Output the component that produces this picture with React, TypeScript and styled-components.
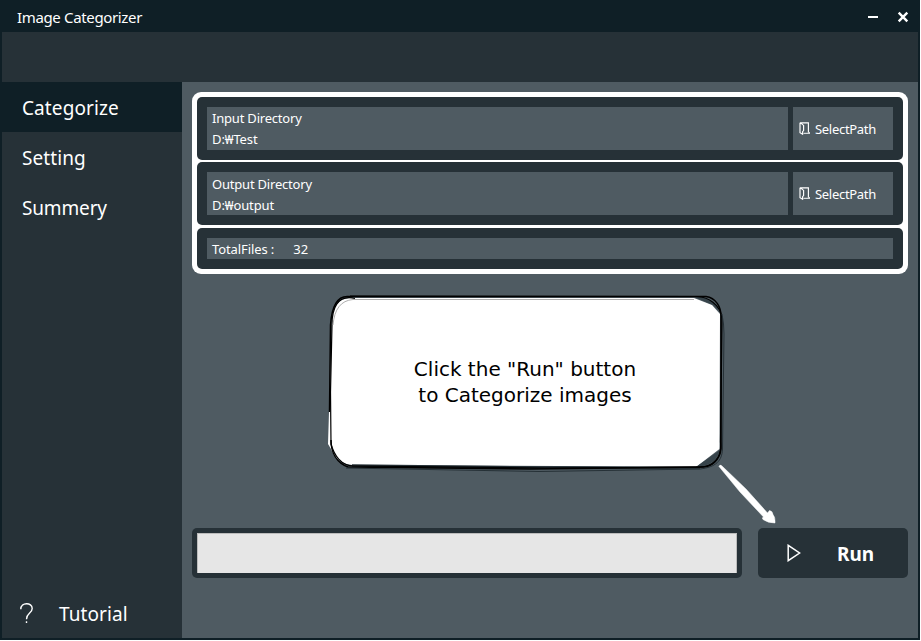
import React from 'react';
import styled, { createGlobalStyle } from 'styled-components';

const Global = createGlobalStyle`
  html, body { margin: 0; background: #fff; overflow: hidden; }
  * { box-sizing: border-box; }
`;

const Window = styled.div`
  width: 920px;
  height: 640px;
  display: grid;
  grid-template-rows: 32px 50px 1fr;
  padding: 0 2px 2px;
  background: #0f1f26;
  color: #fff;
  font-family: "Noto Sans", "Noto Sans CJK KR", sans-serif;
`;

const TitleBar = styled.header`
  display: flex;
  align-items: center;
  justify-content: space-between;
  padding: 3px 9px 0 15px;
`;

const Caption = styled.div<{ $size: number; $spacing?: number; $bold?: boolean }>`
  font-size: ${(p) => p.$size}px;
  letter-spacing: ${(p) => p.$spacing ?? 0}px;
  font-weight: ${(p) => (p.$bold ? 700 : 400)};
  line-height: 1.4;
  white-space: pre;
`;

const WindowButtons = styled.div`
  display: flex;
  align-items: center;
  gap: 18px;
  svg { display: block; margin-top: -2px; }
`;

const Ribbon = styled.div`
  background: #263137;
`;

const Body = styled.div`
  display: grid;
  grid-template-columns: 180px 1fr;
  min-height: 0;
`;

const Sidebar = styled.nav`
  display: flex;
  flex-direction: column;
  background: #263137;
`;

const NavItem = styled.div<{ $active?: boolean }>`
  height: 50px;
  padding: 2px 0 0 20px;
  display: flex;
  align-items: center;
  background: ${(p) => (p.$active ? '#0f1f26' : 'transparent')};
`;

const Tutorial = styled(NavItem)`
  margin-top: auto;
  padding-left: 18px;
  gap: 26px;
  svg { display: block; margin-top: -1px; }
`;

const Content = styled.main`
  display: flex;
  flex-direction: column;
  padding: 10px 10px 60px;
  background: #4f5b62;
`;

const Settings = styled.section`
  height: 182px;
  padding: 5px;
  display: grid;
  grid-template-rows: 62.6px 62.6px 41.3px;
  gap: 2.8px;
  border-radius: 9px;
  background: #fff;
`;

const Row = styled.div`
  display: flex;
  gap: 5px;
  padding: 10px;
  border-radius: 5px;
  background: #263137;
`;

const Field = styled.div`
  flex: 1;
  min-width: 0;
  padding: 1.3px 5px 0;
  background: #4f5b62;
  > div { line-height: 21px; }
`;

const TotalField = styled(Field)`
  display: flex;
  gap: 19px;
`;

const PathButton = styled.div`
  width: 100px;
  display: flex;
  align-items: center;
  gap: 5px;
  padding-left: 6px;
  background: #4f5b62;
  > div { padding-top: 1px; }
`;

const Canvas = styled.div`
  position: relative;
  flex: 1;
`;

const Sketch = styled.svg`
  position: absolute;
  left: 128px;
  top: 11px;
  overflow: visible;
`;

const Message = styled.div`
  position: absolute;
  left: 139px;
  top: 82px;
  width: 388px;
  text-align: center;
  color: #000;
  font: 20px/26px "DejaVu Sans", sans-serif;
`;

const Footer = styled.div`
  display: flex;
  justify-content: space-between;
  height: 50px;
`;

const ProgressFrame = styled.div`
  width: 550px;
  padding: 5px;
  border-radius: 5px;
  background: #263137;
`;

const Progress = styled.div`
  height: 40px;
  border: solid #bcbcbc;
  border-width: 1px 1px 0 1px;
  background: #e6e6e6;
`;

const RunButton = styled.div`
  width: 150px;
  display: flex;
  align-items: center;
  padding-left: 29px;
  gap: 36px;
  border-radius: 5px;
  background: #263137;
  > div { padding-top: 2px; }
`;

const FolderIcon = () => (
  <svg width="11" height="13" viewBox="0 0 11 13" fill="none" stroke="#fff">
    <path d="M.9 .8H9.4V10.8M1 .8V10.7L3.6 12.2V9.7L4.6 8.5V3.4L1.5.9" strokeWidth="1.15" />
    <path d="M4.4 11.4H10.3V10" stroke="#d5d9db" strokeWidth="1.4" />
  </svg>
);

const PathRow = ({ label, value }: { label: string; value: string }) => (
  <Row>
    <Field>
      <Caption $size={13} $spacing={-0.2}>{label}</Caption>
      <Caption $size={13} $spacing={-0.1}>{value}</Caption>
    </Field>
    <PathButton>
      <FolderIcon />
      <Caption $size={13} $spacing={-0.3}>SelectPath</Caption>
    </PathButton>
  </Row>
);

export default function App() {
  return (
    <>
      <Global />
      <Window>
        <TitleBar>
          <Caption $size={15} $spacing={-0.35}>Image Categorizer</Caption>
          <WindowButtons>
            <svg width="12" height="12"><path d="M1 6H11" stroke="#fff" strokeWidth="2" /></svg>
            <svg width="12" height="12"><path d="M1.7 1.7L10.3 10.3M10.3 1.7L1.7 10.3" stroke="#fff" strokeWidth="2.4" /></svg>
          </WindowButtons>
        </TitleBar>
        <Ribbon />
        <Body>
          <Sidebar>
            <NavItem $active><Caption $size={19} $spacing={0.1}>Categorize</Caption></NavItem>
            <NavItem><Caption $size={19} $spacing={0.1}>Setting</Caption></NavItem>
            <NavItem><Caption $size={19} $spacing={-0.15}>Summery</Caption></NavItem>
            <Tutorial>
              <svg width="13" height="21" fill="none" stroke="#fff" strokeWidth="1.4">
                <path d="M.8 6.2C.8-1 12.2-1 12.2 5.6C12.2 10.3 6.5 10 6.5 16.2M6.5 18.3V20" />
              </svg>
              <Caption $size={19} $spacing={0.08}>Tutorial</Caption>
            </Tutorial>
          </Sidebar>
          <Content>
            <Settings>
              <PathRow label="Input Directory" value="D:₩Test" />
              <PathRow label="Output Directory" value="D:₩output" />
              <Row>
                <TotalField>
                  <Caption $size={13} $spacing={-0.1}>TotalFiles :</Caption>
                  <Caption $size={13}>32</Caption>
                </TotalField>
              </Row>
            </Settings>
            <Canvas>
              <Sketch width="460" height="250" viewBox="320 285 460 250" fill="none">
                <path d="M352 298L694 298L712 305L720 314L719.5 449L696 467L560 466L353 465C341 465 334 456 331 449L328 444L329 412L332 318C334 303 341 298 352 298Z" fill="#fff" />
                <path d="M694 297Q711 295 719 311L713 305Z" fill="#36434a" />
                <path d="M696 467Q716 466 720 450Z" fill="#36434a" />
                <path d="M352 465.5L540 467.5L700 468" stroke="#263137" strokeWidth="2.5" />
                <path d="M329.5 412L330.5 325C332 303 339 296 348 296.5L706 296.5C716 298 721 307 721 316L721 449C720 460 711 467 703 467L530 469L348 467C337 463 331 453 331 440" stroke="#000" strokeWidth="1.5" />
                <path d="M355 298.5C337 294 332 309 332 325L330.5 392L331 444C334 455 341 466 354 466L545 468L697 467C714 468 722 457 720.5 442L722 318C720 304 708 297 697 296.5L350 296" stroke="#000" strokeWidth="1.2" />
                <path d="M346 468L539 471.5L700 469C716 467 722 461 722.5 449L724 334Q724 324 722 314" stroke="#263137" strokeWidth="1" />
                <path d="M333 325Q335 301 353 299.5H694" stroke="#999" strokeWidth=".8" />
                <path d="M719 466.5Q720 464 722 466L746 489L767.5 513L769.5 510.5Q772.5 511 773 514.5Q775.5 517 775 523Q768 523 763 519.5Q761.5 517.5 763.5 517L740 492Z" fill="#fff" stroke="#fff" strokeWidth=".5" strokeLinejoin="round" />
              </Sketch>
              <Message>Click the "Run" button<br />to Categorize images</Message>
            </Canvas>
            <Footer>
              <ProgressFrame><Progress /></ProgressFrame>
              <RunButton>
                <svg width="14" height="18" fill="none" stroke="#fff" strokeWidth="1.5"><path d="M1.2 1.3V16.7L12.6 9Z" /></svg>
                <Caption $size={19} $bold>Run</Caption>
              </RunButton>
            </Footer>
          </Content>
        </Body>
      </Window>
    </>
  );
}
